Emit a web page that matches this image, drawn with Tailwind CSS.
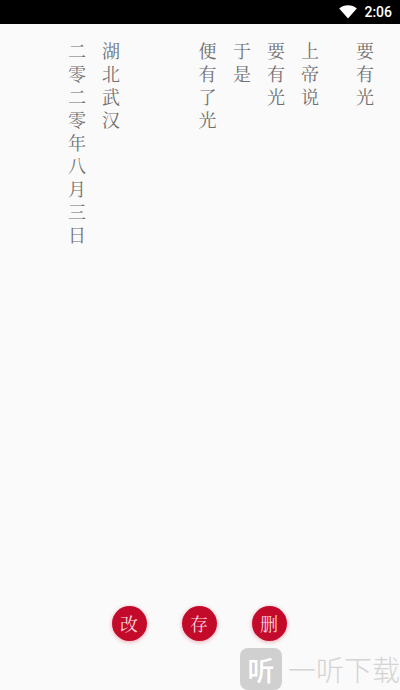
<!DOCTYPE html>
<html lang="zh">
<head>
<meta charset="utf-8">
<script src="https://cdn.jsdelivr.net/npm/@tailwindcss/browser@4"></script>
</head>
<body class="m-0 bg-[#fafafa]">
<div class="relative flex h-[690px] w-[400px] flex-col overflow-hidden bg-[#fafafa] font-['Noto_Serif_CJK_SC','Noto_Sans_CJK_SC',serif]">
  <header class="flex h-6 shrink-0 items-center justify-end bg-black pr-[8px]">
    <svg class="mr-[7px]" width="18" height="14" viewBox="0 0 18 14"><path d="M0.2 3.6C2.7 1.4 5.7 0.3 9 0.3s6.3 1.1 8.8 3.3L9 13.6z" fill="#fff"/></svg>
    <span class="font-['Roboto',sans-serif] text-[14px] leading-none font-medium text-white">2:06</span>
  </header>
  <main class="flex flex-row-reverse justify-start pt-[15px] pr-[18px] text-[18px] leading-[23px] text-[#707070]">
    <p class="ml-[21px] w-[34px] text-center">要<br>有<br>光</p>
    <p class="w-[34px] text-center">上<br>帝<br>说</p>
    <p class="w-[34px] text-center">要<br>有<br>光</p>
    <p class="w-[34px] text-center">于<br>是</p>
    <p class="ml-[62px] w-[35px] text-center">便<br>有<br>了<br>光</p>
    <p class="w-[34px] text-center">湖<br>北<br>武<br>汉</p>
    <p class="w-[34px] text-center">二<br>零<br>二<br>零<br>年<br>八<br>月<br>三<br>日</p>
  </main>
  <div class="mt-auto mb-[49px] flex justify-center gap-[35px] pr-[2px]">
    <button class="flex h-[35px] w-[35px] items-center justify-center rounded-full bg-[#c40a2a] text-[18px] text-[#fbd5dc] shadow-[0_1px_4px_rgba(200,16,46,0.35)]">改</button>
    <button class="flex h-[35px] w-[35px] items-center justify-center rounded-full bg-[#c40a2a] text-[18px] text-[#fbd5dc] shadow-[0_1px_4px_rgba(200,16,46,0.35)]">存</button>
    <button class="flex h-[35px] w-[35px] items-center justify-center rounded-full bg-[#c40a2a] text-[18px] text-[#fbd5dc] shadow-[0_1px_4px_rgba(200,16,46,0.35)]">删</button>
  </div>
  <div class="absolute top-[648px] left-[240px] flex items-center gap-[6px] whitespace-nowrap font-['Noto_Sans_CJK_SC',sans-serif]">
    <span class="flex h-[42px] w-[42px] items-center justify-center rounded-[8px] bg-[#d0d0d0] text-[27px] leading-none font-medium text-white">听</span>
    <span class="text-[28px] leading-[42px] font-light text-[#d4d4d4]">一听下载</span>
  </div>
</div>
</body>
</html>
